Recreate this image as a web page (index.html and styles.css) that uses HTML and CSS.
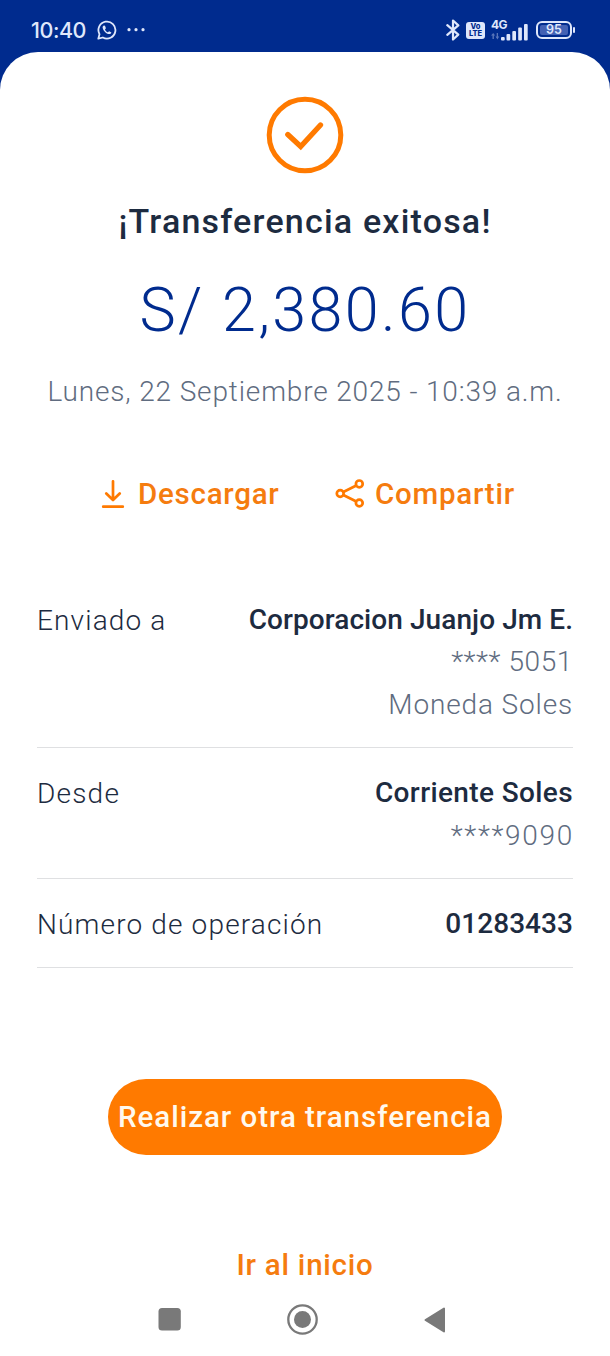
FILE: index.html
```html
<!DOCTYPE html>
<html lang="es">
<head>
<meta charset="utf-8">
<title>Transferencia exitosa</title>
<link rel="stylesheet" href="styles.css">
</head>
<body>
<div class="phone">
  <header class="status">
    <div class="status-left">
      <span class="clock">10:40</span>
      <svg class="whatsapp" width="20" height="20" viewBox="0 0 20 20" fill="none"><path d="M1.3 18.7 2.5 14.2A8.5 8.5 0 1 1 5.8 17.5Z" stroke="#dfe7fb" stroke-width="1.8" stroke-linejoin="round"/><path d="M6.9 5.4c-.5.1-1.4.9-1.3 2 .3 2.9 3.5 6.3 6.7 6.700 1.100.1 2-.8 2.100-1.600l-2.300-1.300-1.200 1.100c-1.300-.5-2.400-1.600-2.900-2.900l.9-1.100-.9-2.500Z" fill="#dfe7fb"/></svg>
      <svg width="18" height="4" viewBox="0 0 18 4" fill="#dfe7fb"><circle cx="2" cy="1.700" r="1.600"/><circle cx="9" cy="1.700" r="1.600"/><circle cx="16" cy="1.700" r="1.600"/></svg>
    </div>
    <div class="status-right">
      <svg class="bt" width="14" height="22" viewBox="0 0 14 22" fill="none" stroke="#dfe7fb" stroke-width="2.200" stroke-linejoin="round" stroke-linecap="round"><path d="M1.300 6.200 12.300 15.600 7 20.500V1.500l5.300 4.900L1.300 15.800"/></svg>
      <div class="volte"><span>Vo</span><span>LTE</span></div>
      <div class="signal">
        <span class="net">4G</span>
        <svg width="37" height="19" viewBox="0 0 37 19" fill="#dfe7fb"><g opacity=".4"><path d="M0 13.500 2.200 11l2 2.500H2.900V17H1.500v-3.500ZM4.500 14.500h1.200V11h1.300v3.500h1.200L6.400 17.500Z"/></g><rect x="10" y="15" width="3.700" height="3.500" rx="1"/><rect x="15.500" y="12" width="3.700" height="6.500" rx="1"/><rect x="21.300" y="9" width="3.700" height="9.500" rx="1"/><rect x="27.200" y="5.500" width="3.700" height="13" rx="1"/><rect x="33" y="2" width="3.700" height="16.500" rx="1"/></svg>
      </div>
      <div class="battery"><span class="level">95</span></div>
    </div>
  </header>

  <main class="sheet">
    <svg class="check" width="78" height="78" viewBox="0 0 78 78" fill="none" stroke="#ff7a00"><circle cx="39" cy="39" r="35.800" stroke-width="5"/><path d="M22.300 38.700 35 51 54.500 29.300" stroke="none"/><path d="M21.800 38.500 34.700 50.500 54.500 29" stroke-width="5.300" stroke-linecap="round"/></svg>
    <h1 class="title">¡Transferencia exitosa!</h1>
    <p class="amount">S/ 2,380.60</p>
    <p class="date">Lunes, 22 Septiembre 2025 - 10:39 a.m.</p>

    <div class="actions">
      <a class="action download"><svg width="24" height="29" viewBox="0 0 24 29" fill="none" stroke="#ff7a00" stroke-width="2.700" stroke-linecap="round" stroke-linejoin="round"><path d="M12 1.300v18M5.300 13.500l6.700 6.500 6.700-6.500M2.200 26.700h19.600"/></svg><span>Descargar</span></a>
      <a class="action share"><svg width="30" height="30" viewBox="0 0 30 30" fill="none" stroke="#ff7a00" stroke-width="2.700"><circle cx="5.200" cy="14.500" r="3.400"/><circle cx="24.300" cy="4.900" r="3.400"/><circle cx="24.300" cy="24" r="3.400"/><path d="m8.300 13 13-6.500M8.300 16l13 6.500"/></svg><span>Compartir</span></a>
    </div>

    <dl class="details">
      <div class="row">
        <dt class="label-sent">Enviado a</dt>
        <dd><strong class="recipient">Corporacion Juanjo Jm E.</strong><span class="account">**** 5051</span><span class="currency">Moneda Soles</span></dd>
      </div>
      <div class="row">
        <dt class="label-from">Desde</dt>
        <dd><strong class="source">Corriente Soles</strong><span class="source-account">****9090</span></dd>
      </div>
      <div class="row">
        <dt class="label-number">Número de operación</dt>
        <dd><strong class="number">01283433</strong></dd>
      </div>
    </dl>

    <button class="primary">Realizar otra transferencia</button>
    <a class="home">Ir al inicio</a>
  </main>

  <nav class="navbar">
    <svg width="23" height="23" viewBox="0 0 23 23"><rect x=".5" width="22.300" height="22.500" rx="3.500" fill="#797979"/></svg>
    <svg width="31" height="31" viewBox="0 0 31 31"><circle cx="15.500" cy="15.500" r="14.200" fill="none" stroke="#797979" stroke-width="2.300"/><circle cx="15.500" cy="15.500" r="8.500" fill="#797979"/></svg>
    <svg width="22" height="26" viewBox="0 0 22 26"><path d="M1.500 13 20 1.500v23Z" fill="#797979" stroke="#797979" stroke-width="2" stroke-linejoin="round"/></svg>
  </nav>
</div>
</body>
</html>
```
FILE: styles.css
```css
* { box-sizing: border-box; margin: 0; padding: 0; }
body { width: 610px; height: 1356px; background: #002b8e; font-family: Roboto, "Open Sans", sans-serif; overflow: hidden; }
.phone { display: flex; flex-direction: column; height: 1356px; background: #002b8e; }

.status { display: flex; justify-content: space-between; height: 52px; padding: 8px 34px 0 31px; color: #dfe7fb; }
.status-left, .status-right { display: flex; align-items: center; height: 44px; }
.clock { width: 55px; font: 500 21.5px/44px Inter, sans-serif; letter-spacing: -0.46px; white-space: nowrap; }
.whatsapp { margin: 0 10px 0 11px; }
.bt { margin-right: 6px; }
.volte { display: flex; flex-direction: column; justify-content: center; align-items: center; width: 19px; height: 17px; border-radius: 3px; background: #dfe7fb; color: #002b8e; font: 800 7.5px/7.5px Inter, sans-serif; margin-right: 6px; }
.volte span { display: block; height: 7.5px; }
.signal { position: relative; width: 37px; height: 21px; margin-right: 8px; }
.signal svg { display: block; margin-top: 2px; }
.net { position: absolute; left: 0; top: -1px; font: 700 12px/11px Inter, sans-serif; letter-spacing: -0.5px; }
.battery { position: relative; width: 36px; height: 18px; padding: 2px; border: 2px solid #dfe7fb; border-radius: 6px; margin-right: 4px; }
.battery::after { content: ""; position: absolute; right: -5px; top: 4px; width: 2px; height: 6px; border-radius: 1px; background: #dfe7fb; }
.level { display: block; height: 10px; border-radius: 2px; background: #4361b4; text-align: center; font: 600 12.5px/10px Inter, sans-serif; }

.sheet { display: flex; flex-direction: column; align-items: center; flex: 1; padding-top: 44px; background: #fff; border-radius: 38px 38px 0 0; color: #1d2b40; white-space: nowrap; }
.check { display: block; }
.title { margin-top: 26px; font-size: 34px; line-height: 42px; font-weight: 500; letter-spacing: 1.2px; }
.amount { margin-top: 32px; font-size: 61px; line-height: 72px; font-weight: 300; letter-spacing: 2.4px; color: #002b8e; }
.date { margin-top: 29px; font-size: 28px; line-height: 34px; font-weight: 300; letter-spacing: 0.85px; color: #606c80; }

.actions { display: flex; align-self: stretch; margin-top: 67px; padding-left: 101px; height: 36px; }
.action { display: flex; align-items: center; font-size: 29.5px; line-height: 36px; font-weight: 500; letter-spacing: 0.75px; color: #f57c0f; }
.download { width: 234px; gap: 13px; }
.share { gap: 10px; }

.details { align-self: stretch; margin: 87px 37px 0; font-size: 28px; line-height: 42.4px; }
.row { display: flex; justify-content: space-between; padding: 24px 0 21px; border-bottom: 1px solid #dfe0e2; }
.row:first-child { padding: 0 0 21px; }
.row dt { padding-top: 1px; font-weight: 300; }
.row dd { display: flex; flex-direction: column; align-items: flex-end; font-weight: 300; color: #606c80; }
.row strong { font-weight: 500; color: #1d2b40; }
.label-sent { letter-spacing: 1.15px; }
.label-from { letter-spacing: 1.2px; }
.label-number { letter-spacing: 1.15px; }
.recipient { letter-spacing: 0.07px; }
.account { letter-spacing: 0.6px; }
.currency { letter-spacing: 0.85px; }
.source { letter-spacing: 0.38px; }
.source-account { letter-spacing: 1.7px; margin-right: -1px; }
.number { letter-spacing: 0.05px; }

.primary { width: 394px; height: 76px; margin-top: 111px; border: 0; border-radius: 38px; background: #ff7a00; color: #fff9ee; font: 500 29.5px/36px Roboto, sans-serif; letter-spacing: 0.97px; white-space: nowrap; }
.home { margin-top: 92px; font-size: 29.5px; line-height: 36px; font-weight: 500; letter-spacing: 0.75px; color: #f57c0f; }

.navbar { display: flex; align-items: center; justify-content: space-between; height: 74px; padding: 0 164px 0 158px; background: #fff; }
```
